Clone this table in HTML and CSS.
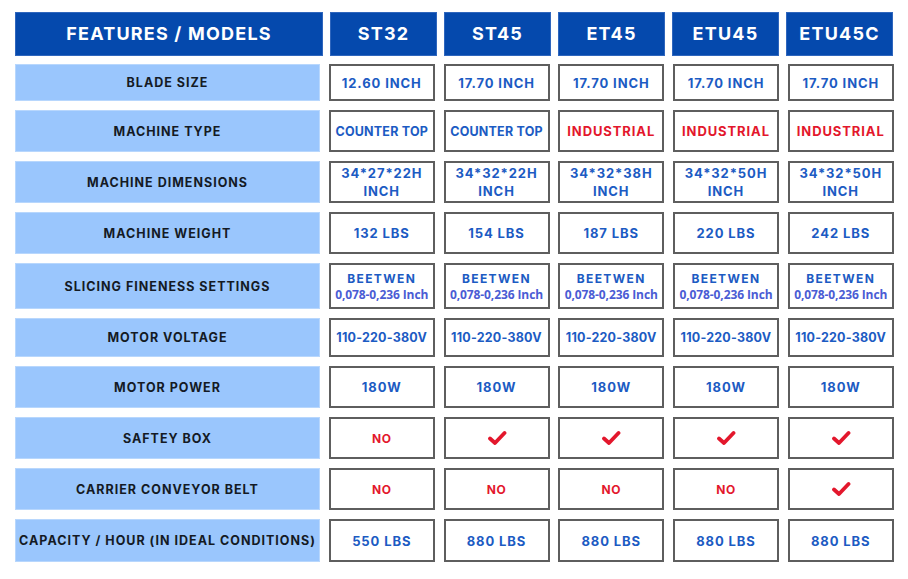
FILE: index.html
```html
<!DOCTYPE html>
<html lang="en">
<head>
<meta charset="utf-8">
<title>Features / Models</title>
<link rel="stylesheet" href="styles.css">
</head>
<body>
<div class="table">
  <div class="head-row">
    <div class="head head-main">FEATURES / MODELS</div>
    <div class="head">ST32</div>
    <div class="head">ST45</div>
    <div class="head">ET45</div>
    <div class="head">ETU45</div>
    <div class="head">ETU45C</div>
  </div>

  <div class="row h37">
    <div class="label">BLADE SIZE</div>
    <div class="cell">12.60 INCH</div>
    <div class="cell">17.70 INCH</div>
    <div class="cell">17.70 INCH</div>
    <div class="cell">17.70 INCH</div>
    <div class="cell">17.70 INCH</div>
  </div>

  <div class="row h42">
    <div class="label">MACHINE TYPE</div>
    <div class="cell tight">COUNTER TOP</div>
    <div class="cell tight">COUNTER TOP</div>
    <div class="cell red">INDUSTRIAL</div>
    <div class="cell red">INDUSTRIAL</div>
    <div class="cell red">INDUSTRIAL</div>
  </div>

  <div class="row h42">
    <div class="label">MACHINE DIMENSIONS</div>
    <div class="cell two">34*27*22H<br>INCH</div>
    <div class="cell two">34*32*22H<br>INCH</div>
    <div class="cell two">34*32*38H<br>INCH</div>
    <div class="cell two">34*32*50H<br>INCH</div>
    <div class="cell two">34*32*50H<br>INCH</div>
  </div>

  <div class="row h42">
    <div class="label">MACHINE WEIGHT</div>
    <div class="cell">132 LBS</div>
    <div class="cell">154 LBS</div>
    <div class="cell">187 LBS</div>
    <div class="cell">220 LBS</div>
    <div class="cell">242 LBS</div>
  </div>

  <div class="row h46">
    <div class="label">SLICING FINENESS SETTINGS</div>
    <div class="cell fine"><span class="fine-top">BEETWEN</span><span class="fine-sub">0,078-0,236 Inch</span></div>
    <div class="cell fine"><span class="fine-top">BEETWEN</span><span class="fine-sub">0,078-0,236 Inch</span></div>
    <div class="cell fine"><span class="fine-top">BEETWEN</span><span class="fine-sub">0,078-0,236 Inch</span></div>
    <div class="cell fine"><span class="fine-top">BEETWEN</span><span class="fine-sub">0,078-0,236 Inch</span></div>
    <div class="cell fine"><span class="fine-top">BEETWEN</span><span class="fine-sub">0,078-0,236 Inch</span></div>
  </div>

  <div class="row h39">
    <div class="label">MOTOR VOLTAGE</div>
    <div class="cell tight">110-220-380V</div>
    <div class="cell tight">110-220-380V</div>
    <div class="cell tight">110-220-380V</div>
    <div class="cell tight">110-220-380V</div>
    <div class="cell tight">110-220-380V</div>
  </div>

  <div class="row h42">
    <div class="label">MOTOR POWER</div>
    <div class="cell">180W</div>
    <div class="cell">180W</div>
    <div class="cell">180W</div>
    <div class="cell">180W</div>
    <div class="cell">180W</div>
  </div>

  <div class="row h42">
    <div class="label">SAFTEY BOX</div>
    <div class="cell red no">NO</div>
    <div class="cell"><svg class="check" viewBox="0 0 20 16"><path d="M3 8.5 L8 13 L17.5 3" /></svg></div>
    <div class="cell"><svg class="check" viewBox="0 0 20 16"><path d="M3 8.5 L8 13 L17.5 3" /></svg></div>
    <div class="cell"><svg class="check" viewBox="0 0 20 16"><path d="M3 8.5 L8 13 L17.5 3" /></svg></div>
    <div class="cell"><svg class="check" viewBox="0 0 20 16"><path d="M3 8.5 L8 13 L17.5 3" /></svg></div>
  </div>

  <div class="row h42">
    <div class="label">CARRIER CONVEYOR BELT</div>
    <div class="cell red no">NO</div>
    <div class="cell red no">NO</div>
    <div class="cell red no">NO</div>
    <div class="cell red no">NO</div>
    <div class="cell"><svg class="check" viewBox="0 0 20 16"><path d="M3 8.5 L8 13 L17.5 3" /></svg></div>
  </div>

  <div class="row h43">
    <div class="label">CAPACITY / HOUR (IN IDEAL CONDITIONS)</div>
    <div class="cell">550 LBS</div>
    <div class="cell">880 LBS</div>
    <div class="cell">880 LBS</div>
    <div class="cell">880 LBS</div>
    <div class="cell">880 LBS</div>
  </div>
</div>
</body>
</html>
```

FILE: styles.css
```css
* { box-sizing: border-box; }

html, body {
  margin: 0;
  padding: 0;
  background: #ffffff;
}

body {
  width: 908px;
  height: 579px;
  overflow: hidden;
  font-family: Inter, "Liberation Sans", Arial, sans-serif;
}

.table {
  display: flex;
  flex-direction: column;
  gap: 9px;
  padding: 12px 0 0 15px;
}

.head-row {
  display: grid;
  grid-template-columns: 308px repeat(5, 107px);
  column-gap: 7px;
  height: 44px;
  margin-bottom: -1px;
}

.head {
  background: #0549ad;
  color: #ffffff;
  font-weight: 700;
  font-size: 18px;
  letter-spacing: 1.2px;
  display: flex;
  align-items: center;
  justify-content: center;
  border: 1px solid #2f66bd;
  padding-bottom: 1px;
}

.row {
  display: grid;
  grid-template-columns: 305px repeat(5, 106px);
  column-gap: 8.75px;
}

.h37 { height: 37px; }
.h39 { height: 39px; }
.h42 { height: 42px; }
.h43 { height: 43px; }
.h46 { height: 46px; }

.label {
  background: #9ac6fd;
  border: 1px solid #b8d7fd;
  color: #141a24;
  font-weight: 700;
  font-size: 12.5px;
  letter-spacing: 1px;
  display: flex;
  align-items: center;
  justify-content: center;
  white-space: nowrap;
}

.cell {
  border: 2px solid #5e5e5e;
  background: #ffffff;
  color: #1c5bc3;
  font-weight: 700;
  font-size: 13px;
  letter-spacing: 0.9px;
  display: flex;
  align-items: center;
  justify-content: center;
  text-align: center;
  white-space: nowrap;
}

.cell.tight {
  letter-spacing: 0.2px;
  font-size: 12.5px;
}

.cell.two {
  line-height: 18px;
  padding-bottom: 1px;
}

.cell.red {
  color: #e3172c;
}

.cell.no {
  font-size: 12px;
  letter-spacing: 0.6px;
}

.cell.fine {
  flex-direction: column;
  gap: 1px;
}

.fine-top {
  font-size: 12px;
  letter-spacing: 1.4px;
  line-height: 15px;
}

.fine-sub {
  font-family: "Open Sans", "Noto Sans", sans-serif;
  font-weight: 700;
  font-size: 12px;
  letter-spacing: -0.1px;
  color: #4a5cd4;
  line-height: 15px;
}

.check {
  width: 20px;
  height: 16px;
}

.check path {
  fill: none;
  stroke: #e3172c;
  stroke-width: 3.8;
  stroke-linecap: round;
  stroke-linejoin: round;
}
```
